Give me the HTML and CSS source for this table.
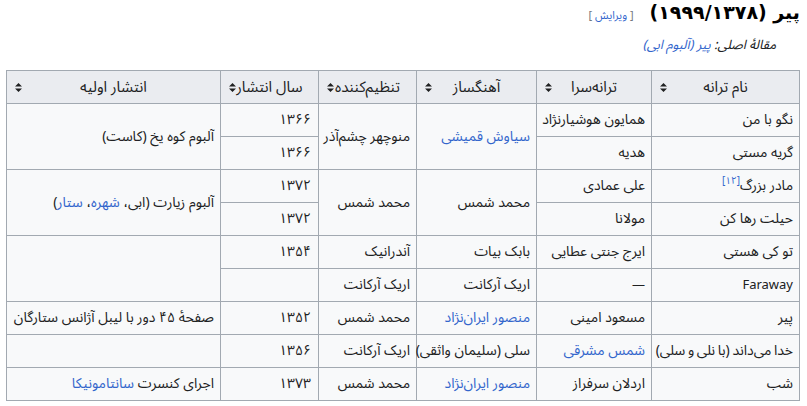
FILE: index.html
```html
<!DOCTYPE html>
<html lang="fa" dir="rtl">
<head>
<meta charset="utf-8">
<link rel="stylesheet" href="styles.css">
</head>
<body>
<div class="page">
  <h3 class="heading"><span class="title">پیر (۱۹۹۹/۱۳۷۸)</span><span class="edit"><span class="br">[</span> <a href="#">ویرایش</a> <span class="br">]</span></span></h3>
  <div class="hatnote">مقالهٔ اصلی: <a href="#">پیر (آلبوم ابی)</a></div>
  <table class="wikitable">
    <colgroup>
      <col class="c1"><col class="c2"><col class="c3"><col class="c4"><col class="c5"><col class="c6">
    </colgroup>
    <thead>
      <tr>
        <th><span class="hlabel">نام ترانه</span><span class="sort"><svg width="7" height="9" viewBox="0 0 7 9"><path d="M3.5 0L7 3.6H0Z M3.5 9L0 5.4H7Z" fill="#202122"/></svg></span></th>
        <th><span class="hlabel">ترانه‌سرا</span><span class="sort"><svg width="7" height="9" viewBox="0 0 7 9"><path d="M3.5 0L7 3.6H0Z M3.5 9L0 5.4H7Z" fill="#202122"/></svg></span></th>
        <th><span class="hlabel">آهنگساز</span><span class="sort"><svg width="7" height="9" viewBox="0 0 7 9"><path d="M3.5 0L7 3.6H0Z M3.5 9L0 5.4H7Z" fill="#202122"/></svg></span></th>
        <th><span class="hlabel">تنظیم‌کننده</span><span class="sort"><svg width="7" height="9" viewBox="0 0 7 9"><path d="M3.5 0L7 3.6H0Z M3.5 9L0 5.4H7Z" fill="#202122"/></svg></span></th>
        <th><span class="hlabel">سال انتشار</span><span class="sort"><svg width="7" height="9" viewBox="0 0 7 9"><path d="M3.5 0L7 3.6H0Z M3.5 9L0 5.4H7Z" fill="#202122"/></svg></span></th>
        <th><span class="hlabel">انتشار اولیه</span><span class="sort"><svg width="7" height="9" viewBox="0 0 7 9"><path d="M3.5 0L7 3.6H0Z M3.5 9L0 5.4H7Z" fill="#202122"/></svg></span></th>
      </tr>
    </thead>
    <tbody>
      <tr>
        <td>نگو با من</td>
        <td>همایون هوشیارنژاد</td>
        <td rowspan="2"><a href="#">سیاوش قمیشی</a></td>
        <td rowspan="2">منوچهر چشم‌آذر</td>
        <td class="num">۱۳۶۶</td>
        <td rowspan="2">آلبوم کوه یخ (کاست)</td>
      </tr>
      <tr>
        <td>گریه مستی</td>
        <td>هدیه</td>
        <td class="num">۱۳۶۶</td>
      </tr>
      <tr>
        <td>مادر بزرگ<sup class="ref"><a href="#">[۱۲]</a></sup></td>
        <td>علی عمادی</td>
        <td rowspan="2">محمد شمس</td>
        <td rowspan="2">محمد شمس</td>
        <td class="num">۱۳۷۲</td>
        <td rowspan="2">آلبوم زیارت (ابی، <a href="#">شهره</a>، <a href="#">ستار</a>)</td>
      </tr>
      <tr>
        <td>حیلت رها کن</td>
        <td>مولانا</td>
        <td class="num">۱۳۷۲</td>
      </tr>
      <tr>
        <td>تو کی هستی</td>
        <td>ایرج جنتی عطایی</td>
        <td>بابک بیات</td>
        <td>آندرانیک</td>
        <td class="num">۱۳۵۴</td>
        <td rowspan="2"></td>
      </tr>
      <tr>
        <td class="latin">Faraway</td>
        <td class="latin">—</td>
        <td>اریک آرکانت</td>
        <td>اریک آرکانت</td>
        <td></td>
      </tr>
      <tr>
        <td>پیر</td>
        <td>مسعود امینی</td>
        <td><a href="#">منصور ایران‌نژاد</a></td>
        <td>محمد شمس</td>
        <td class="num">۱۳۵۲</td>
        <td>صفحهٔ ۴۵ دور با لیبل آژانس ستارگان</td>
      </tr>
      <tr>
        <td class="tight">خدا می‌داند (با نلی و سلی)</td>
        <td><a href="#">شمس مشرقی</a></td>
        <td>سلی (سلیمان واثقی)</td>
        <td>اریک آرکانت</td>
        <td class="num">۱۳۵۶</td>
        <td></td>
      </tr>
      <tr>
        <td>شب</td>
        <td>اردلان سرفراز</td>
        <td><a href="#">منصور ایران‌نژاد</a></td>
        <td>محمد شمس</td>
        <td class="num">۱۳۷۳</td>
        <td>اجرای کنسرت <a href="#">سانتامونیکا</a></td>
      </tr>
    </tbody>
  </table>
</div>
</body>
</html>
```
FILE: styles.css
```css
html, body {
  margin: 0;
  padding: 0;
  background: #ffffff;
}
body {
  font-family: "Noto Sans Arabic", "DejaVu Sans", sans-serif;
  color: #202122;
  font-size: 14px;
}
.page {
  padding: 0 7px 0 7px;
}
a {
  color: #3366cc;
  text-decoration: none;
}
.heading {
  margin: 0;
  padding: 0;
  height: 26px;
  line-height: 24px;
  display: flex;
  align-items: baseline;
  gap: 16px;
  font-weight: bold;
}
.title {
  font-family: "DejaVu Sans", sans-serif;
  font-size: 19px;
  line-height: 24px;
  color: #000;
}
.edit {
  font-size: 11px;
  line-height: 14px;
  font-weight: normal;
}
.edit .br {
  color: #72777d;
}
.hatnote {
  font-style: italic;
  padding-right: 24px;
  padding-top: 8px;
  height: 36px;
  line-height: 22px;
  font-size: 13px;
  color: #202122;
}
.wikitable {
  border-collapse: collapse;
  table-layout: fixed;
  width: 793px;
  background: #f8f9fa;
  color: #202122;
  font-size: 14px;
}
.c1 { width: 148px; }
.c2 { width: 115px; }
.c3 { width: 120px; }
.c4 { width: 98px; }
.c5 { width: 98px; }
.c6 { width: 214px; }
.wikitable th,
.wikitable td {
  border: 1px solid #a2a9b1;
  padding: 0 6px;
  height: 33px;
  line-height: 20px;
  box-sizing: border-box;
  white-space: nowrap;
}
.wikitable td {
  text-align: right;
}
.wikitable td.latin {
  font-size: 13px;
}
.wikitable td.num {
  padding-right: 7px;
}
.wikitable td.tight {
  word-spacing: -1px;
}
.wikitable th {
  background: #eaecf0;
  font-weight: normal;
  text-align: center;
  position: relative;
  font-size: 15px;
}
.sort {
  position: absolute;
  left: 8px;
  top: 12px;
  line-height: 0;
}
.ref {
  font-size: 10px;
  line-height: 0;
  vertical-align: 6px;
}
```
